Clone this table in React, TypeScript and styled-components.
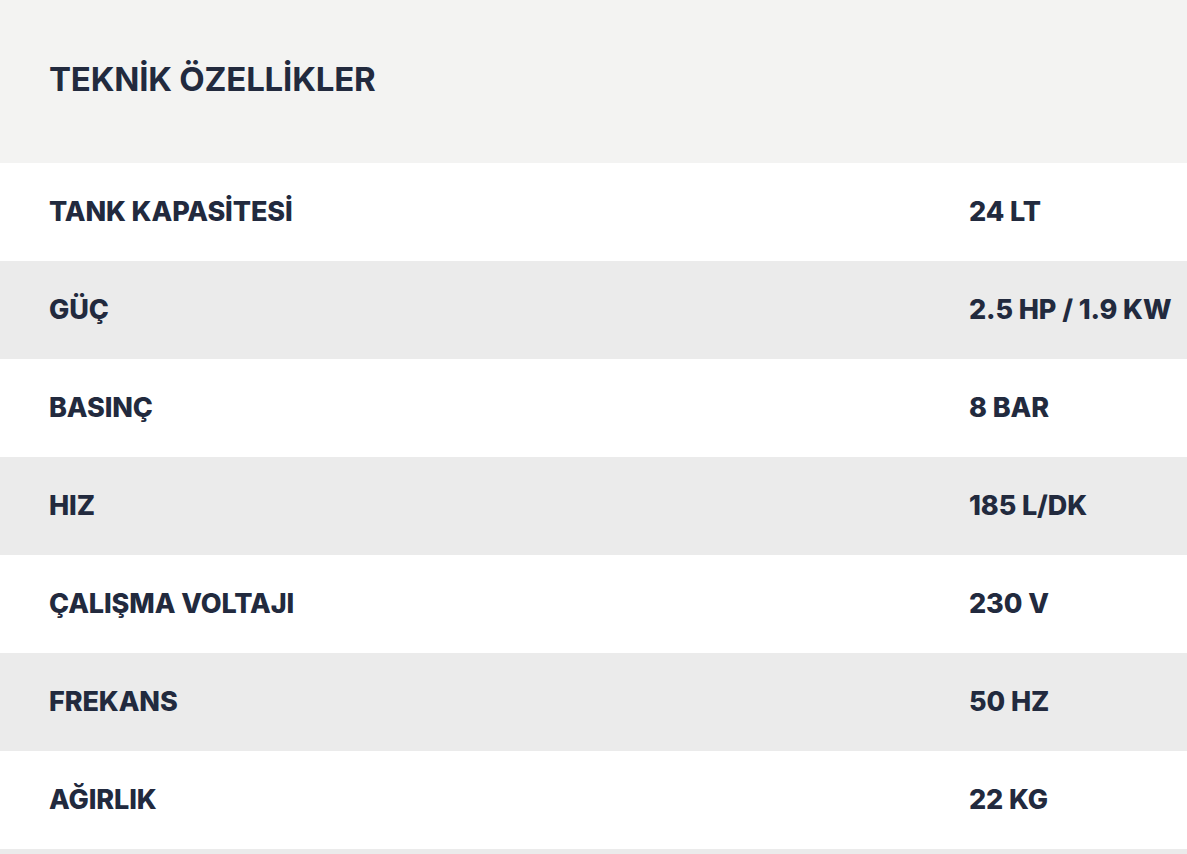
import styled, { createGlobalStyle } from 'styled-components';

const GlobalStyle = createGlobalStyle`
  body {
    margin: 0;
    background: #ffffff;
    font-family: 'Inter', 'Noto Sans', sans-serif;
  }
`;

const Container = styled.section`
  width: 1187px;
  color: #222a3e;
`;

const Header = styled.div`
  height: 163px;
  background: #f3f3f2;
  display: flex;
  align-items: center;
  padding-left: 49px;
  box-sizing: border-box;
`;

const Title = styled.h2`
  margin: 0;
  margin-bottom: 6px;
  font-size: 33px;
  font-weight: 700;
  letter-spacing: -0.2px;
`;

const Table = styled.div`
  display: flex;
  flex-direction: column;
  border-bottom: 8px solid #ebebeb;
`;

const Row = styled.div<{ $striped: boolean }>`
  display: grid;
  grid-template-columns: 920px 1fr;
  align-items: center;
  height: 98px;
  padding-left: 49px;
  padding-bottom: 2px;
  box-sizing: border-box;
  background: ${({ $striped }) => ($striped ? '#ebebeb' : '#ffffff')};
`;

const Cell = styled.div`
  font-size: 27px;
  font-weight: 800;
  letter-spacing: -0.1px;
  white-space: nowrap;
`;

const specs: [string, string][] = [
  ['TANK KAPASİTESİ', '24 LT'],
  ['GÜÇ', '2.5 HP / 1.9 KW'],
  ['BASINÇ', '8 BAR'],
  ['HIZ', '185 L/DK'],
  ['ÇALIŞMA VOLTAJI', '230 V'],
  ['FREKANS', '50 HZ'],
  ['AĞIRLIK', '22 KG'],
];

const App = () => {
  return (
    <>
      <GlobalStyle />
      <Container>
        <Header>
          <Title>TEKNİK ÖZELLİKLER</Title>
        </Header>
        <Table>
          {specs.map(([label, value], i) => (
            <Row key={label} $striped={i % 2 === 1}>
              <Cell>{label}</Cell>
              <Cell>{value}</Cell>
            </Row>
          ))}
        </Table>
      </Container>
    </>
  );
};

export default App;
